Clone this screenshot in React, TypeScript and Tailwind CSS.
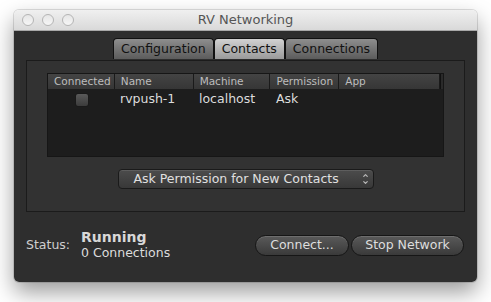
import { ChevronUp, ChevronDown } from 'lucide-react';

const font = { fontFamily: '"DejaVu Sans", "Liberation Sans", sans-serif' };

function TrafficLight() {
  return (
    <span className="h-[12px] w-[12px] rounded-full border border-[#b4b4b4] bg-gradient-to-b from-[#e6e6e6] to-[#f6f6f6]" />
  );
}

function Tab({ label, active }: { label: string; active?: boolean }) {
  return (
    <div
      className={
        'flex h-[21px] items-center rounded-t-[4px] border border-b-0 border-[#111] px-[7px] text-[12.5px] text-[#111] ' +
        (active
          ? 'bg-gradient-to-b from-[#d2d2d2] to-[#9a9a9a]'
          : 'bg-gradient-to-b from-[#8e8e8e] to-[#5c5c5c]')
      }
    >
      {label}
    </div>
  );
}

const columns = [
  { label: 'Connected', width: 'w-[67px]' },
  { label: 'Name', width: 'w-[79px]' },
  { label: 'Machine', width: 'w-[77px]' },
  { label: 'Permission', width: 'w-[69px]' },
  { label: 'App', width: 'w-[101px]' },
];

function ContactsTable() {
  return (
    <div className="mx-[20px] mt-[12px] h-[84px] border border-[#161616] bg-[#1d1d1d]">
      <div className="flex h-[15px] bg-gradient-to-b from-[#444] to-[#363636] text-[10.5px] leading-[15px] text-[#bdbdbd]">
        {columns.map((c) => (
          <div key={c.label} className={`${c.width} overflow-hidden whitespace-nowrap border-r border-[#1a1a1a] pl-[6px]`}>
            {c.label}
          </div>
        ))}
        <div className="w-[3px] border-l border-[#111] bg-[#2a2a2a]" />
      </div>
      <div className="flex h-[21px] items-center text-[12.5px] text-[#dcdcdc]">
        <div className="flex w-[67px] justify-center">
          <span className="h-[14px] w-[14px] rounded-[3px] border border-[#1a1a1a] bg-gradient-to-b from-[#5a5a5a] to-[#3c3c3c]" />
        </div>
        <div className="w-[79px] pl-[5px]">rvpush-1</div>
        <div className="w-[77px] pl-[5px]">localhost</div>
        <div className="w-[69px] pl-[5px]">Ask</div>
      </div>
    </div>
  );
}

function PillButton({ label, width }: { label: string; width: string }) {
  return (
    <button
      className={`${width} flex h-[21px] items-center justify-center rounded-full border border-[#161616] bg-gradient-to-b from-[#5a5a5a] to-[#3a3a3a] text-[12.5px] text-[#dedede] shadow-[inset_0_1px_0_rgba(255,255,255,0.12)]`}
    >
      {label}
    </button>
  );
}

export default function App() {
  return (
    <div className="h-[302px] w-[491px] bg-white pl-[14px] pt-[10px]" style={font}>
      <div className="flex h-[272px] w-[463px] flex-col overflow-hidden rounded-[5px] shadow-[0_0_0_1px_rgba(0,0,0,0.12),0_10px_22px_rgba(0,0,0,0.4)]">
        <div className="relative flex h-[21px] items-center justify-center border-b border-[#a8a8a8] bg-gradient-to-b from-[#f0f0f0] to-[#d9d9d9]">
          <div className="absolute left-[8px] top-[4px] flex gap-[8px]">
            <TrafficLight />
            <TrafficLight />
            <TrafficLight />
          </div>
          <span className="text-[13px] text-[#555]">RV Networking</span>
        </div>

        <div className="flex flex-1 flex-col bg-[#2e2e2e]">
          <div className="mt-[7px] flex justify-center">
            <Tab label="Configuration" />
            <Tab label="Contacts" active />
            <Tab label="Connections" />
          </div>

          <div className="mx-[12px] mt-px flex h-[152px] flex-col border border-[#1b1b1b] bg-[#323232]">
            <ContactsTable />
            <div className="mt-[12px] flex justify-center">
              <div className="flex h-[20px] w-[256px] items-center justify-between rounded-[4px] border border-[#1a1a1a] bg-gradient-to-b from-[#4c4c4c] to-[#383838] pl-[15px] pr-[4px] text-[12.5px] text-[#e0e0e0] shadow-[inset_0_1px_0_rgba(255,255,255,0.1)]">
                <span>Ask Permission for New Contacts</span>
                <span className="flex flex-col items-center text-[#bbb]">
                  <ChevronUp size={7} strokeWidth={4} />
                  <ChevronDown size={7} strokeWidth={4} />
                </span>
              </div>
            </div>
          </div>

          <div className="mt-[16px] flex h-[34px] items-center pl-[12px] pr-[13px]">
            <span className="w-[55px] text-[12.5px] text-[#cfcfcf]">Status:</span>
            <div className="flex flex-col leading-none">
              <span className="text-[14px] font-bold text-[#d8d8d8]">Running</span>
              <span className="mt-[3px] text-[12.5px] text-[#dcdcdc]">0 Connections</span>
            </div>
            <div className="ml-auto flex gap-[2px]">
              <PillButton label="Connect..." width="w-[94px]" />
              <PillButton label="Stop Network" width="w-[113px]" />
            </div>
          </div>
        </div>
      </div>
    </div>
  );
}
